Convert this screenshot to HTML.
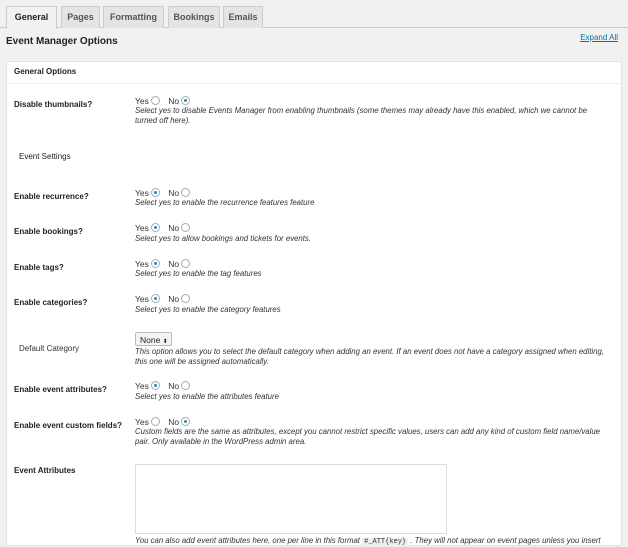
<!DOCTYPE html>
<html><head><style>
body{margin:0;width:628px;height:546px;background:#f1f1f1;font-family:"Liberation Sans",sans-serif;color:#222;overflow:hidden;position:relative}
.a{position:absolute;white-space:nowrap;line-height:10px}
.tab{position:absolute;top:6px;height:21px;border:1px solid #ccc;border-bottom:none;background:#e4e4e4;font-size:9px;font-weight:bold;color:#555;text-align:center;line-height:21px}
.l{font-size:8px;font-weight:bold;left:14px}
.d{font-size:7.8px;font-style:italic;color:#333;left:135px}
.r{font-size:8.5px;left:135px;color:#333}
.rb{display:inline-block;width:7px;height:7px;border:1px solid #aaa;border-radius:50%;vertical-align:-1px;background:#fff;position:relative;margin:0 6px 0 2px}
.on:after{content:"";position:absolute;left:2px;top:2px;width:3px;height:3px;border-radius:50%;background:#1e8cbe}
</style></head><body>
<div style="position:absolute;left:0;right:0;top:27px;border-top:1px solid #ccc"></div>
<div class="tab" style="left:6px;width:49px;background:#f1f1f1;color:#222;height:22px">General</div>
<div class="tab" style="left:61px;width:37px">Pages</div>
<div class="tab" style="left:103px;width:59px">Formatting</div>
<div class="tab" style="left:168px;width:50px">Bookings</div>
<div class="tab" style="left:223px;width:38px">Emails</div>
<div class="a" style="left:6px;top:37px;font-size:10px;font-weight:bold">Event Manager Options</div>
<div class="a" style="right:10px;top:33px;font-size:8px;color:#0074a2;text-decoration:underline">Expand All</div>
<div style="position:absolute;left:6px;right:6px;top:61px;bottom:0;background:#fff;border:1px solid #e2e2e2"></div>
<div style="position:absolute;left:7px;right:7px;top:83px;border-top:1px solid #eee"></div>
<div class="a l" style="top:67px">General Options</div>

<div class="a l" style="top:100px">Disable thumbnails?</div>
<div class="a r" style="top:96px">Yes<span class="rb"></span> No<span class="rb on"></span></div>
<div class="a d" style="top:106px">Select yes to disable Events Manager from enabling thumbnails (some themes may already have this enabled, which we cannot be</div>
<div class="a d" style="top:116px">turned off here).</div>

<div class="a" style="left:19px;top:152px;font-size:8px">Event Settings</div>

<div class="a l" style="top:192px">Enable recurrence?</div>
<div class="a r" style="top:188px">Yes<span class="rb on"></span> No<span class="rb"></span></div>
<div class="a d" style="top:198px">Select yes to enable the recurrence features feature</div>

<div class="a l" style="top:227px">Enable bookings?</div>
<div class="a r" style="top:223px">Yes<span class="rb on"></span> No<span class="rb"></span></div>
<div class="a d" style="top:234px">Select yes to allow bookings and tickets for events.</div>

<div class="a l" style="top:263px">Enable tags?</div>
<div class="a r" style="top:259px">Yes<span class="rb on"></span> No<span class="rb"></span></div>
<div class="a d" style="top:269px">Select yes to enable the tag features</div>

<div class="a l" style="top:298px">Enable categories?</div>
<div class="a r" style="top:294px">Yes<span class="rb on"></span> No<span class="rb"></span></div>
<div class="a d" style="top:305px">Select yes to enable the category features</div>

<div class="a" style="left:19px;top:344px;font-size:8px;color:#333">Default Category</div>
<div class="a" style="left:135px;top:332px;width:37px;height:14px;border:1px solid #bbb;border-radius:2px;background:#f4f4f4;font-size:8.5px;line-height:14px;padding-left:4px;box-sizing:border-box">None <span style="font-size:6px">⬍</span></div>
<div class="a d" style="top:347px">This option allows you to select the default category when adding an event. If an event does not have a category assigned when editing,</div>
<div class="a d" style="top:357px">this one will be assigned automatically.</div>

<div class="a l" style="top:385px">Enable event attributes?</div>
<div class="a r" style="top:381px">Yes<span class="rb on"></span> No<span class="rb"></span></div>
<div class="a d" style="top:392px">Select yes to enable the attributes feature</div>

<div class="a l" style="top:421px">Enable event custom fields?</div>
<div class="a r" style="top:417px">Yes<span class="rb"></span> No<span class="rb on"></span></div>
<div class="a d" style="top:427px">Custom fields are the same as attributes, except you cannot restrict specific values, users can add any kind of custom field name/value</div>
<div class="a d" style="top:437px">pair. Only available in the WordPress admin area.</div>

<div class="a l" style="top:466px">Event Attributes</div>
<div style="position:absolute;left:135px;top:464px;width:310px;height:68px;border:1px solid #ddd;background:#fff"></div>
<div class="a d" style="top:536px">You can also add event attributes here, one per line in this format <span style="font-style:normal;font-family:'Liberation Mono',monospace;background:#eee;font-size:7px;padding:0 2px">#_ATT{key}</span> . They will not appear on event pages unless you insert</div>
</body></html>
